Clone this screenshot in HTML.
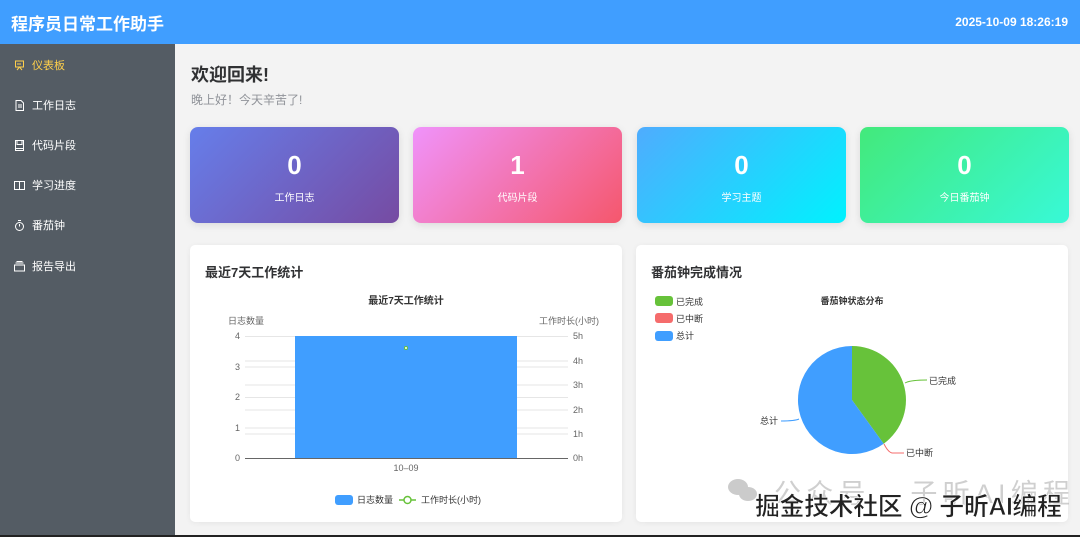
<!DOCTYPE html>
<html><head><meta charset="utf-8"><style>
*{margin:0;padding:0;box-sizing:border-box}
body{width:1080px;height:537px;overflow:hidden;background:#f3f3f3;font-family:"Liberation Sans","Noto Sans CJK SC",sans-serif;position:relative}
.hd{position:absolute;left:0;top:0;width:1080px;height:44px;background:#409eff;color:#fff}
.hd .t{position:absolute;left:11px;top:10px;font-size:17px;font-weight:bold}
.hd .d{position:absolute;right:12px;top:15px;font-size:12px;font-weight:bold}
.sb{position:absolute;left:0;top:44px;width:175px;height:493px;background:#545c64}
.mi{position:absolute;left:14px;font-size:11px;color:#fff;display:flex;align-items:center}
.mi svg{margin-right:7px}
.h1{position:absolute;left:191px;top:61px;font-size:18px;font-weight:bold;color:#303133}
.sub{position:absolute;left:191px;top:91px;font-size:12px;color:#909399}
.card{position:absolute;top:127px;height:96px;width:209px;border-radius:8px;color:#fff;text-align:center;box-shadow:0 2px 8px rgba(0,0,0,.1)}
.card .n{font-size:26px;font-weight:bold;margin-top:23px}
.card .l{font-size:10px;margin-top:8px}
.pn{position:absolute;top:245px;height:277px;background:#fff;border-radius:5px;box-shadow:0 1px 6px rgba(0,0,0,.06)}
.pn .tt{position:absolute;left:15px;top:17px;font-size:13px;font-weight:bold;color:#303133}
svg text{font-family:"Liberation Sans","Noto Sans CJK SC",sans-serif}
</style></head><body>
<div class="hd"><div class="t">程序员日常工作助手</div><div class="d">2025-10-09 18:26:19</div></div>
<div class="sb">
<div class="mi" style="top:13px;color:#ffd04b"><svg width="11" height="11" viewBox="0 0 11 11" fill="none" stroke="#ffd04b" stroke-width="1"><path d="M1 1h9M1.5 1v6h8V1M3 10l2.5-3 2.5 3M4 3v2M6 3v2"/></svg>仪表板</div>
<div class="mi" style="top:53px"><svg width="11" height="11" viewBox="0 0 11 11" fill="none" stroke="#fff"><path d="M2 .5h5l2.5 2.5v7.5H2zM4 5h4M4 7h4"/></svg>工作日志</div>
<div class="mi" style="top:93px"><svg width="11" height="11" viewBox="0 0 11 11" fill="none" stroke="#fff"><path d="M1.5 .5h8v10h-8zM3 .5v4h5v-4M1.5 8.5h8"/></svg>代码片段</div>
<div class="mi" style="top:133px"><svg width="11" height="11" viewBox="0 0 11 11" fill="none" stroke="#fff"><path d="M.5 1.5h10v8H.5zM5.5 1.5v8"/></svg>学习进度</div>
<div class="mi" style="top:173px"><svg width="11" height="11" viewBox="0 0 11 11" fill="none" stroke="#fff"><circle cx="5.5" cy="6.5" r="4"/><path d="M5.5 6.5V4M4 .5h3"/></svg>番茄钟</div>
<div class="mi" style="top:214px"><svg width="11" height="11" viewBox="0 0 11 11" fill="none" stroke="#fff"><path d="M.5 4h10v6H.5zM1.5 2h8M2.5 .5h6"/></svg>报告导出</div>
</div>
<div class="h1">欢迎回来!</div>
<div class="sub">晚上好！今天辛苦了!</div>
<div class="card" style="left:190px;background:linear-gradient(135deg,#667eea,#764ba2)"><div class="n">0</div><div class="l">工作日志</div></div>
<div class="card" style="left:413px;background:linear-gradient(135deg,#f093fb,#f5576c)"><div class="n">1</div><div class="l">代码片段</div></div>
<div class="card" style="left:637px;background:linear-gradient(135deg,#4facfe,#00f2fe)"><div class="n">0</div><div class="l">学习主题</div></div>
<div class="card" style="left:860px;background:linear-gradient(135deg,#43e97b,#38f9d7)"><div class="n">0</div><div class="l">今日番茄钟</div></div>
<div class="pn" style="left:190px;width:432px"><div class="tt">最近7天工作统计</div></div>
<div class="pn" style="left:636px;width:432px"><div class="tt">番茄钟完成情况</div></div>
<svg style="position:absolute;left:0;top:0" width="1080" height="537">
<g font-size="9" fill="#666">
<text x="406" y="304" text-anchor="middle" font-weight="bold" fill="#333" font-size="10">最近7天工作统计</text>
<text x="228" y="324">日志数量</text><text x="539" y="324">工作时长(小时)</text>
<g stroke="#e6e6e6" stroke-width="1">
<line x1="245" x2="568" y1="336.5" y2="336.5"/><line x1="245" x2="568" y1="367" y2="367"/><line x1="245" x2="568" y1="397.5" y2="397.5"/><line x1="245" x2="568" y1="428" y2="428"/>
<line x1="245" x2="568" y1="361" y2="361"/><line x1="245" x2="568" y1="385" y2="385"/><line x1="245" x2="568" y1="410" y2="410"/><line x1="245" x2="568" y1="434" y2="434"/>
</g>
<rect x="295" y="336" width="222" height="122" fill="#409eff"/>
<line x1="245" x2="568" y1="458.5" y2="458.5" stroke="#666"/>
<circle cx="406" cy="348" r="1.5" fill="#fff" stroke="#67c23a"/>
<g text-anchor="end"><text x="240" y="339">4</text><text x="240" y="370">3</text><text x="240" y="400">2</text><text x="240" y="431">1</text><text x="240" y="461">0</text></g>
<text x="573" y="339">5h</text><text x="573" y="364">4h</text><text x="573" y="388">3h</text><text x="573" y="413">2h</text><text x="573" y="437">1h</text><text x="573" y="461">0h</text>
<text x="406" y="471" text-anchor="middle">10–09</text>
<rect x="335" y="495" width="18" height="10" rx="3" fill="#409eff"/><text x="357" y="503" fill="#333">日志数量</text>
<line x1="399" x2="416" y1="500" y2="500" stroke="#67c23a" stroke-width="1.5"/><circle cx="407.5" cy="500" r="3.5" fill="#fff" stroke="#67c23a" stroke-width="1.5"/><text x="421" y="503" fill="#333">工作时长(小时)</text>
<text x="852" y="304" text-anchor="middle" font-weight="bold" fill="#333">番茄钟状态分布</text>
<rect x="655" y="296" width="18" height="10" rx="3" fill="#67c23a"/><text x="676" y="305" fill="#333">已完成</text>
<rect x="655" y="313" width="18" height="10" rx="3" fill="#f56c6c"/><text x="676" y="322" fill="#333">已中断</text>
<rect x="655" y="331" width="18" height="10" rx="3" fill="#409eff"/><text x="676" y="339" fill="#333">总计</text>
<path d="M852 400 L852 346 A54 54 0 0 1 883.7 443.7 Z" fill="#67c23a"/>
<path d="M852 400 L883.7 443.7 A54 54 0 1 1 852 346 Z" fill="#409eff"/>
<path d="M905 383 q5-3 22-3" fill="none" stroke="#67c23a"/><text x="929" y="384" fill="#333">已完成</text>
<path d="M884 444 q4 8 8 9 h12" fill="none" stroke="#f56c6c"/><text x="906" y="456" fill="#333">已中断</text>
<path d="M799 419 q-4 2-18 2" fill="none" stroke="#409eff"/><text x="760" y="424" fill="#333">总计</text>
</g>
<g opacity=".6" fill="#aaa"><ellipse cx="738" cy="487" rx="10" ry="8"/><ellipse cx="748" cy="494" rx="9" ry="7"/></g>
<text x="774" y="503" font-size="27" fill="#bbb" opacity=".7" textLength="296">公众号 · 子昕AI编程</text>
<text x="755" y="515" font-size="25" font-weight="bold" fill="#222" stroke="#fff" stroke-width=".7" textLength="307">掘金技术社区 @ 子昕AI编程</text>
<rect x="0" y="535" width="1080" height="2" fill="#222"/>
</svg>
</body></html>
